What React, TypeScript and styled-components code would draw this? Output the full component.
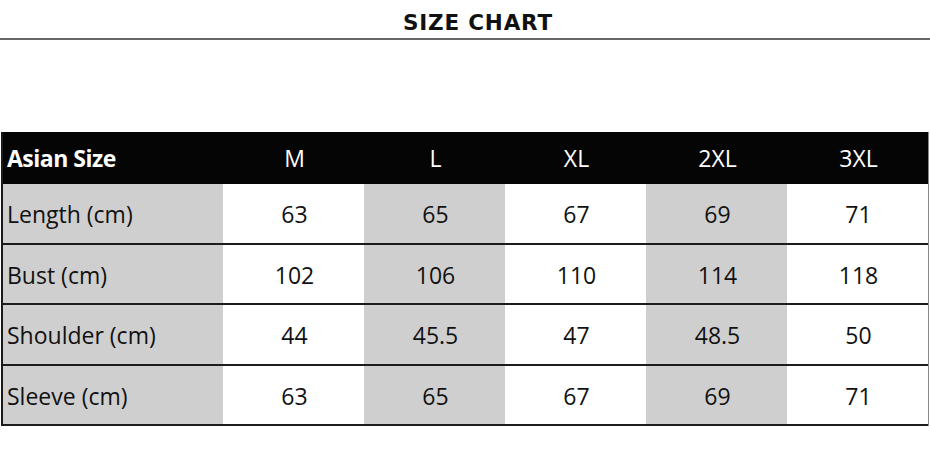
import React from "react";
import styled, { createGlobalStyle } from "styled-components";

const GlobalStyle = createGlobalStyle`
  html, body {
    margin: 0;
    padding: 0;
    background: #ffffff;
  }
  body {
    font-family: "Open Sans", "Liberation Sans", sans-serif;
    color: #111;
  }
`;

const Page = styled.div`
  width: 930px;
  height: 462px;
  overflow: hidden;
  display: flex;
  flex-direction: column;
`;

const TitleBar = styled.div`
  height: 38px;
  display: flex;
  align-items: flex-end;
  justify-content: center;
  padding-left: 26px;
  padding-bottom: 0;
  border-bottom: 2px solid #666;
  box-sizing: border-box;
  height: 40px;
`;

const Title = styled.h1`
  margin: 0 0 5px 0;
  line-height: 1;
  font-family: "DejaVu Sans", "Liberation Sans", sans-serif;
  font-weight: 700;
  font-size: 21.5px;
  letter-spacing: 0.8px;
  color: #111;
`;

const Table = styled.div`
  margin-top: 92px;
  margin-left: 1px;
  width: 928px;
  display: grid;
  grid-template-columns: 220px repeat(5, 1fr);
  border-left: 2px solid #1a1a1a;
  border-right: 1px solid #8a8a8a;
  box-sizing: border-box;
`;

const HeadCell = styled.div<{ $label?: boolean }>`
  height: 52px;
  background: #050505;
  color: #fff;
  display: flex;
  align-items: center;
  justify-content: ${(p) => (p.$label ? "flex-start" : "center")};
  padding-left: ${(p) => (p.$label ? "4px" : "2px")};
  font-size: 23px;
  font-weight: ${(p) => (p.$label ? 700 : 400)};
  letter-spacing: ${(p) => (p.$label ? "-0.5px" : "0")};
`;

const Cell = styled.div<{ $shade: boolean; $label?: boolean }>`
  height: 60.5px;
  box-sizing: border-box;
  border-bottom: 2px solid #1c1c1c;
  background: ${(p) => (p.$shade ? "#d0cfd0" : "#ffffff")};
  display: flex;
  align-items: center;
  justify-content: ${(p) => (p.$label ? "flex-start" : "center")};
  padding-left: ${(p) => (p.$label ? "4px" : "2px")};
  padding-top: 2px;
  font-size: 23px;
  color: #111;
`;

const sizes = ["M", "L", "XL", "2XL", "3XL"];

const rows: { label: string; values: string[] }[] = [
  { label: "Length (cm)", values: ["63", "65", "67", "69", "71"] },
  { label: "Bust (cm)", values: ["102", "106", "110", "114", "118"] },
  { label: "Shoulder (cm)", values: ["44", "45.5", "47", "48.5", "50"] },
  { label: "Sleeve (cm)", values: ["63", "65", "67", "69", "71"] },
];

export default function App() {
  return (
    <React.Fragment>
      <GlobalStyle />
      <Page>
        <TitleBar>
          <Title>SIZE CHART</Title>
        </TitleBar>
        <Table>
          <HeadCell $label>Asian Size</HeadCell>
          {sizes.map((s) => (
            <HeadCell key={s}>{s}</HeadCell>
          ))}
          {rows.map((row) => (
            <React.Fragment key={row.label}>
              <Cell $shade $label>
                {row.label}
              </Cell>
              {row.values.map((v, i) => (
                <Cell key={i} $shade={i % 2 === 1}>
                  {v}
                </Cell>
              ))}
            </React.Fragment>
          ))}
        </Table>
      </Page>
    </React.Fragment>
  );
}
